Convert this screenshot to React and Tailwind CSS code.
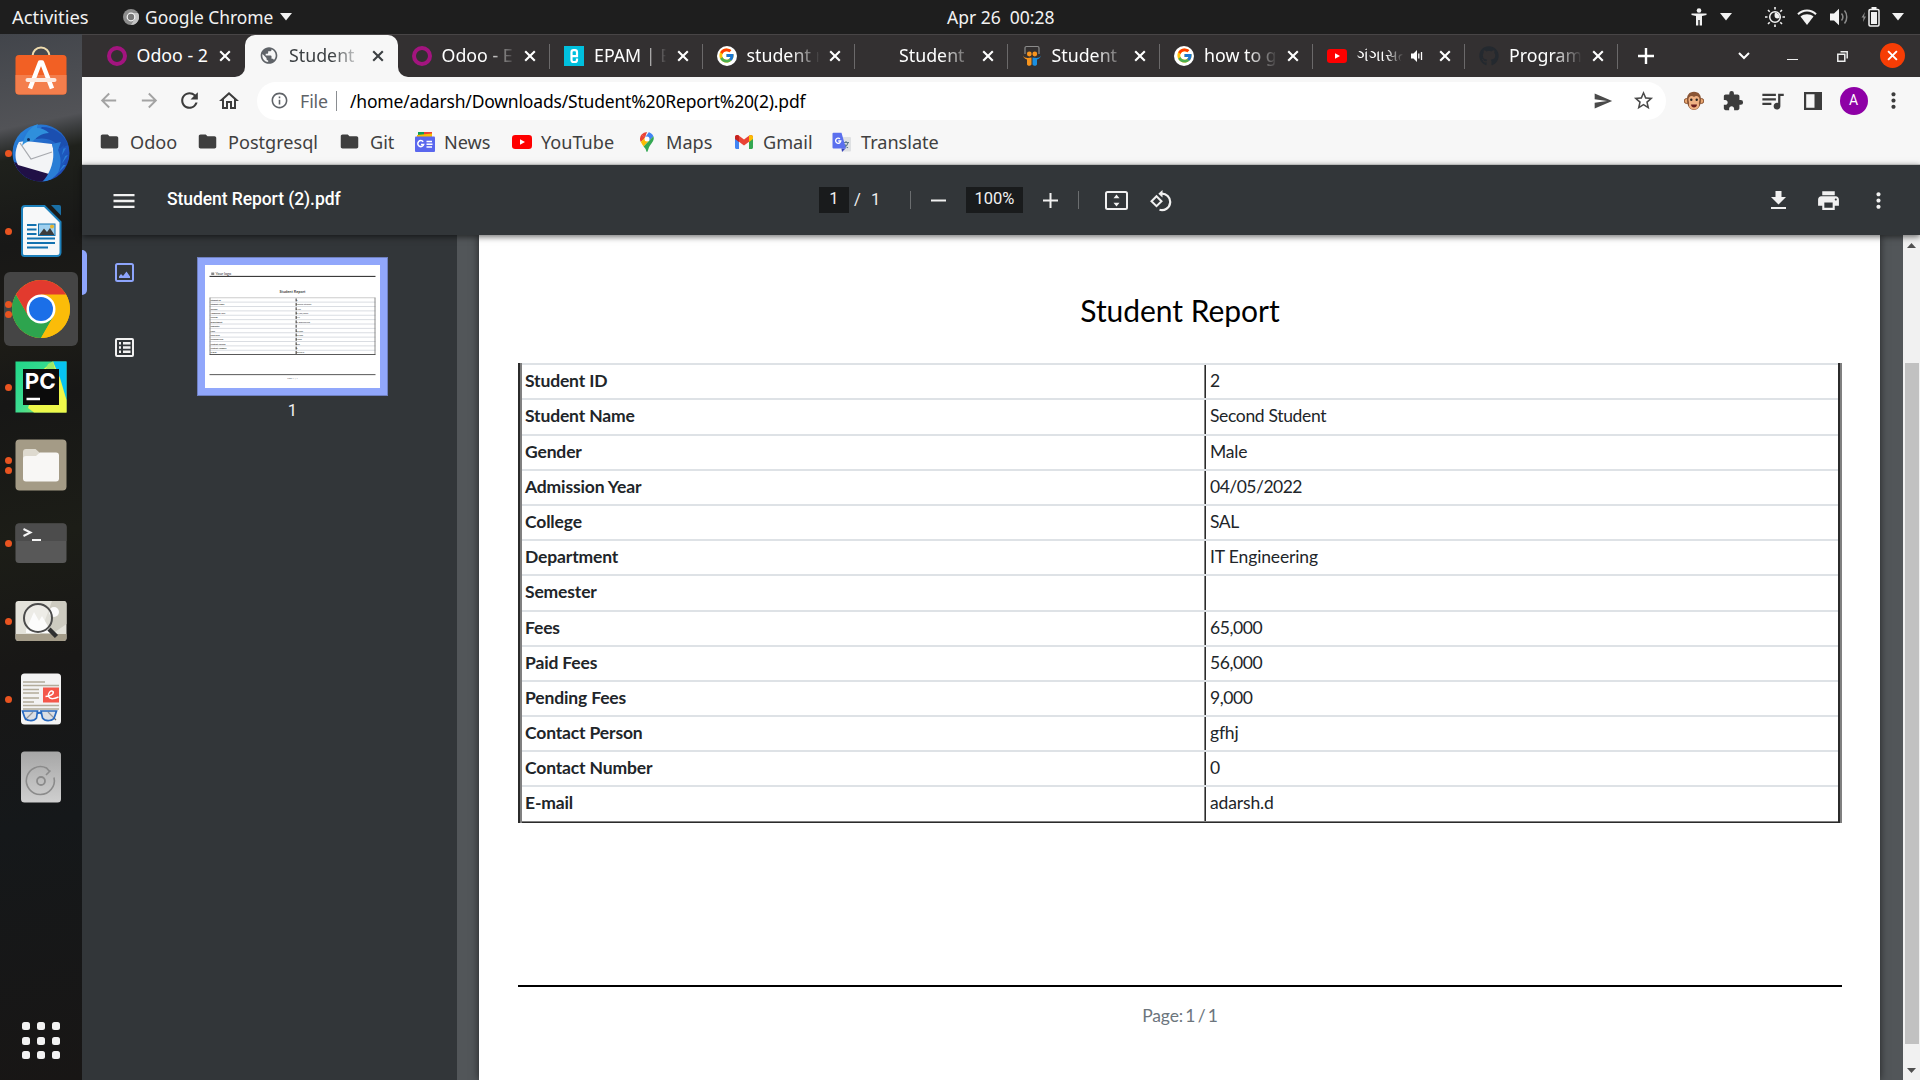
import React from "react";
import {
  MdArrowBack, MdArrowForward, MdRefresh, MdOutlineHome, MdSend, MdStarBorder, MdExtension,
  MdQueueMusic, MdFolder, MdPrint, MdMoreVert, MdInfoOutline, MdPublic, MdMenu,
} from "react-icons/md";
import { FcGoogle } from "react-icons/fc";
import { FaGithub } from "react-icons/fa";

const rows = [
  ["Student ID", "2", "h-[35px]", ""],
  ["Student Name", "Second Student", "h-[36px]", "tracking-[-0.34px]"],
  ["Gender", "Male", "h-[35px]", "tracking-[-0.2px]"],
  ["Admission Year", "04/05/2022", "h-[35px]", "tracking-[-0.5px]"],
  ["College", "SAL", "h-[35px]", "tracking-[-0.4px]"],
  ["Department", "IT Engineering", "h-[35px]", "tracking-[-0.13px]"],
  ["Semester", "", "h-[36px]", ""],
  ["Fees", "65,000", "h-[35px]", "tracking-[-0.4px]"],
  ["Paid Fees", "56,000", "h-[35px]", "tracking-[-0.4px]"],
  ["Pending Fees", "9,000", "h-[35px]", "tracking-[-0.4px]"],
  ["Contact Person", "gfhj", "h-[35px]", "tracking-[-0.2px]"],
  ["Contact Number", "0", "h-[35px]", ""],
  ["E-mail", "adarsh.d", "h-[36px]", "tracking-[-0.13px]"],
];

function CloseX({ className = "" }) {
  return (
    <svg viewBox="0 0 12 12" className={`size-3 shrink-0 ${className}`}>
      <path d="M1.2 1.2 10.8 10.8M10.8 1.2 1.2 10.8" stroke="currentColor" strokeWidth="2.1" fill="none" />
    </svg>
  );
}

function YouTube() {
  return (
    <svg viewBox="0 0 20 14" className="w-5 h-3.5">
      <rect width="20" height="14" rx="3.2" fill="#f00" />
      <path d="M8 4.2v5.6L13 7z" fill="#fff" />
    </svg>
  );
}

function OdooRing() {
  return <div className="size-5 rounded-full border-[4.5px] border-[#a3147f]" />;
}

function GoogleDisc() {
  return (
    <div className="size-5 rounded-full bg-white flex items-center justify-center">
      <FcGoogle className="size-[17px]" />
    </div>
  );
}

function Epam() {
  return (
    <svg viewBox="0 0 20 20" className="size-5">
      <rect width="20" height="20" fill="#00c0de" />
      <path d="M13 12.500v1.500a2 2 0 0 1-2 2H9.500a2 2 0 0 1-2-2V6.200a2 2 0 0 1 2-2H11a2 2 0 0 1 2 2v4H8" fill="none" stroke="#fff" strokeWidth="2.200" />
    </svg>
  );
}

function SlideShare() {
  return (
    <svg viewBox="0 0 20 22" className="w-5 h-[22px]">
      <path d="M3 9V3a1.500 1.500 0 0 1 1.500-1.500h11A1.500 1.500 0 0 1 17 3v6" fill="none" stroke="#8b8b8b" strokeWidth="1.200" />
      <circle cx="7.300" cy="9" r="2.400" fill="#f7941e" />
      <circle cx="12.800" cy="9" r="2.400" fill="#f7941e" />
      <path d="M1 10.500c1.500 3 5 2.500 8.500 2v7c-1 1.500-3.500 2-4.500 0v-5C3 14 1.500 12.500 1 10.500z" fill="#f7941e" />
      <path d="M19 10.500c-1.500 3-5 2.500-8.500 2v7c1 1.500 3.500 2 4.500 0v-5c2-.5 3.500-2 4-4z" fill="#1b8fe0" />
    </svg>
  );
}

function Speaker({ className }) {
  return (
    <svg viewBox="0 0 14 14" className={className}>
      <path d="M1 4.500h2.500L7 1v12L3.500 9.500H1z" fill="#fff" />
      <path d="M8.800 4.500v5M11.500 3v8" stroke="#fff" strokeWidth="1.300" />
    </svg>
  );
}

const tabs = [
  { icon: <OdooRing />, label: "Odoo - 2" },
  { icon: <MdPublic className="size-[23px] text-[#5f6368]" />, label: "Student", active: true },
  { icon: <OdooRing />, label: "Odoo - E", fade: true },
  { icon: <Epam />, label: "EPAM | E", fade: true },
  { icon: <GoogleDisc />, label: "student r", fade: true },
  { icon: null, label: "Student", fade: true },
  { icon: <SlideShare />, label: "Student", fade: true },
  { icon: <GoogleDisc />, label: "how to g", fade: true },
  { icon: <YouTube />, label: "ગંગાસતી", fade: true, audio: true },
  { icon: <FaGithub className="size-5 text-[#24292f]" />, label: "Program", fade: true },
];

function Tab({ tab, separator }) {
  const tone = tab.active ? "bg-[#f7f7f7] text-[#3c4043] rounded-t-[10px]" : "text-white";
  return (
    <div className={`relative w-[152.500px] h-full flex items-center shrink-0 pl-[14px] pb-px ${tone}`}>
      {tab.active && (
        <>
          <div className="absolute bottom-0 -left-[10px] size-[10px] overflow-hidden bg-[#f7f7f7]"><div className="size-full rounded-br-[10px] bg-[#333031]" /></div>
          <div className="absolute bottom-0 -right-[10px] size-[10px] overflow-hidden bg-[#f7f7f7]"><div className="size-full rounded-bl-[10px] bg-[#333031]" /></div>
        </>
      )}
      <div className="w-5 h-6 flex items-center justify-center shrink-0">{tab.icon}</div>
      <div className={`ml-2.5 overflow-hidden whitespace-nowrap leading-6 -mt-px ${tab.audio ? "w-[46px] text-[16px]" : "w-[72px] text-[17.800px]"} ${tab.fade || tab.active ? "[mask-image:linear-gradient(to_right,black_60%,rgba(0,0,0,0.15)_97%,transparent)]" : ""}`}>{tab.label}</div>
      {tab.audio && <Speaker className="size-3.5 ml-[7px] mr-[5px]" />}
      <CloseX className="ml-[10.500px]" />
      {separator && <div className="absolute right-0 top-[9px] w-px h-[25px] bg-[#6b696a]" />}
    </div>
  );
}

function Caret({ className = "" }) {
  return <svg viewBox="0 0 12 8" className={`w-3 h-2 shrink-0 ${className}`}><path d="M0 0h12L6 7.500z" fill="#f2f2f2" /></svg>;
}

function TopBar() {
  return (
    <div className="h-[34px] bg-[#1e1e1e] text-[#f2f2f2] flex items-center text-[17.500px] leading-6 shrink-0">
      <div className="w-[123px] pl-3 text-[18.400px]">Activities</div>
      <svg viewBox="0 0 16 16" className="size-4">
        <circle cx="8" cy="8" r="8" fill="#8d8d8d" />
        <path d="M8 4h7a8 8 0 0 1-7 12l3.500-6z" fill="#c4c4c4" />
        <circle cx="8" cy="8" r="3.800" fill="#777" stroke="#f5f5f5" strokeWidth="1.200" />
      </svg>
      <div className="ml-[6px] w-[129px] whitespace-nowrap text-[17.400px]">Google Chrome</div>
      <Caret className="ml-[6px]" />
      <div className="ml-[655px] w-[109px] whitespace-pre">Apr 26  00:28</div>
      <svg viewBox="0 0 16 18" className="ml-[635px] w-4 h-[18px]">
        <circle cx="8" cy="2.500" r="2.300" fill="#f2f2f2" />
        <path d="M.5 5.500h15v1.600L11 8v9.500H8.700V12H7.300v5.500H5V8L.5 7.100z" fill="#f2f2f2" />
      </svg>
      <Caret className="ml-[13px]" />
      <svg viewBox="0 0 20 20" className="ml-[33px] size-5">
        <g stroke="#f2f2f2" strokeWidth="1.600"><path d="M10 0v2.500M10 17.500V20M0 10h2.500M17.500 10H20M3 3l1.700 1.700M15.300 15.300 17 17M17 3l-1.700 1.700M4.700 15.300 3 17" /></g>
        <circle cx="10" cy="10" r="5.300" fill="none" stroke="#f2f2f2" strokeWidth="1.500" />
        <path d="M10 5.500c-1.500 5 1 7 4.500 5.500A5 5 0 0 0 10 5.500z" fill="#f2f2f2" />
      </svg>
      <svg viewBox="0 0 20 16" className="ml-[12px] w-5 h-4">
        <path d="M10 16 3.500 7.500C7 4.500 13 4.500 16.500 7.500z" fill="#f2f2f2" />
        <path d="M1 5.300C6 .2 14 .2 19 5.300" fill="none" stroke="#f2f2f2" strokeWidth="2" />
      </svg>
      <svg viewBox="0 0 19 18" className="ml-[13px] w-[19px] h-[18px]">
        <path d="M0 5.500h4L9 .8v16.400L4 12.500H0z" fill="#f2f2f2" />
        <path d="M11.500 5.500c1.600 2 1.600 5 0 7M14.500 2.500c3 3.500 3 9.500 0 13" fill="none" stroke="#8a8a8a" strokeWidth="1.500" />
      </svg>
      <svg viewBox="0 0 19 20" className="ml-[12px] w-[19px] h-5">
        <path d="M4 5 .5 10.500h2L2 15l3-5.500H3z" fill="#8a8a8a" />
        <rect x="8" y="2.500" width="10" height="16.500" rx="1.200" fill="none" stroke="#f2f2f2" strokeWidth="1.500" />
        <path d="M10.500 0h5v2h-5zM10 5h6v12h-6z" fill="#f2f2f2" />
      </svg>
      <Caret className="ml-[12px]" />
    </div>
  );
}

function TabStrip() {
  return (
    <div className="h-[43px] bg-[#333031] border-t border-[#484546] flex items-center text-white pl-[10.500px] shrink-0">
      {tabs.map((t, i) => <Tab key={i} tab={t} separator={i > 1} />)}
      <svg viewBox="0 0 16 16" className="ml-[20px] mb-px size-4"><path d="M8 0v16M0 8h16" stroke="#fff" strokeWidth="2.400" /></svg>
      <svg viewBox="0 0 12 8" className="ml-[84px] w-3 h-2"><path d="m1 1 5 5 5-5" fill="none" stroke="#fff" strokeWidth="2" /></svg>
      <div className="ml-[37px] mt-[7px] w-[11px] h-[1.500px] bg-[#eee]" />
      <svg viewBox="0 0 11 11" className="ml-[39px] size-[11px]"><path d="M.8 3.200h7v7h-7zM3.500.8h6.700v6.700" fill="none" stroke="#eee" strokeWidth="1.500" /></svg>
      <div className="ml-[32px] mb-px size-[25px] rounded-full bg-[#f63d05] flex items-center justify-center"><CloseX className="size-[11px]" /></div>
    </div>
  );
}

function Monkey() {
  return (
    <svg viewBox="0 0 20 20" className="size-5">
      <circle cx="2.700" cy="10" r="2.500" fill="#e8a66f" stroke="#8a5535" />
      <circle cx="17.300" cy="10" r="2.500" fill="#e8a66f" stroke="#8a5535" />
      <path d="M10 .8c5 0 7.300 3.500 7 8.500-.2 6-3 9.700-7 9.700s-6.800-3.700-7-9.700C2.700 4.300 5 .8 10 .8z" fill="#8a5535" />
      <path d="M10 6c2-2 5.500-1 5.500 2.500 0 2-1 2.500-.5 5 .3 3.500-2.500 5-5 5s-5.300-1.500-5-5c.500-2.500-.5-3-.5-5C4.500 5 8 4 10 6z" fill="#efb183" />
      <circle cx="7.300" cy="8.700" r="1.200" fill="#2a2320" /><circle cx="12.700" cy="8.700" r="1.200" fill="#2a2320" />
      <path d="M7 13.500h6c0 4-6 4-6 0z" fill="#6b1f1f" />
    </svg>
  );
}

function Toolbar() {
  return (
    <div className="h-[46px] pt-px flex items-center pl-[15px] text-[#3c3c3c] shrink-0">
      <MdArrowBack className="size-[23px] text-[#a3a3a3]" />
      <MdArrowForward className="ml-[17.500px] size-[23px] text-[#a3a3a3]" />
      <MdRefresh className="ml-[16px] size-[25px]" />
      <MdOutlineHome className="ml-[15px] size-[24px]" />
      <div className="ml-[16.500px] w-[1409px] h-[38px] rounded-full bg-white flex items-center pl-[13px]">
        <MdInfoOutline className="size-[19px] text-[#5f6368]" />
        <div className="ml-[11px] w-[27px] text-[17.800px] leading-6 text-[#5f6368] tracking-[-0.1px]">File</div>
        <div className="ml-[9px] w-px h-[20px] bg-[#8a8d91]" />
        <div className="ml-[13px] whitespace-nowrap text-[17.500px] tracking-[-0.180px] leading-6 text-black w-[460px]">/home/adarsh/Downloads/Student%20Report%20(2).pdf</div>
        <MdSend className="ml-[783px] size-[20px] text-[#4a4a4a]" />
        <MdStarBorder className="ml-[19px] size-[23px] text-[#4a4a4a]" />
      </div>
      <div className="ml-[17.500px]"><Monkey /></div>
      <MdExtension className="ml-[18.500px] size-[22px]" />
      <MdQueueMusic className="ml-[15px] size-[27px]" />
      <svg viewBox="0 0 18 18" className="ml-[17.500px] size-[18px]"><path d="M0 0h18v18H0zM2.200 2.200v13.600h8.300V2.200z" fill="#3c3c3c" fillRule="evenodd" /></svg>
      <div className="ml-[18px] size-7 rounded-full bg-[#8e00a6] text-white text-[14px] font-[Roboto,sans-serif] flex items-center justify-center">A</div>
      <MdMoreVert className="ml-[13px] size-[25px]" />
    </div>
  );
}

function NewsIcon() {
  return (
    <svg viewBox="0 0 20 20" className="size-5">
      <path d="M3 0h9v4H3z" fill="#0c9d58" /><path d="M9 0h8v5H9z" fill="#ea4335" />
      <path d="m2 3 15-1.500V8H2z" fill="#fbbc04" />
      <rect y="4.500" width="20" height="15.500" rx="1" fill="#5a67ee" />
      <path d="M8.200 9.800a3 3 0 1 0 .5 2.600H6M11.500 9.500h5.500M11.500 12.300h6M11.500 15.100h5.500" fill="none" stroke="#fff" strokeWidth="1.500" />
    </svg>
  );
}
function MapsIcon() {
  return (
    <svg viewBox="0 0 14 20" className="w-3.5 h-5">
      <path d="M7 0a7 7 0 0 0-5.400 2.500L5 5.400z" fill="#ea4335" />
      <path d="M1.600 2.500A7 7 0 0 0 .8 10L5.500 5.800z" fill="#ea4335" />
      <path d="M7 0c2.900 0 5.400 1.700 6.400 4.200L8.600 9.500 5 5.400 8.800.2z" fill="#4285f4" />
      <path d="M.8 10 5 5.400l3.600 3.800-5 5.300C2.500 13 1.500 11.500.8 10z" fill="#fbbc04" />
      <path d="M13.400 4.200c1.800 5.300-3.200 7.300-5 12.800-.5 1.500-.8 3-1.400 3s-.9-1.500-1.400-3l-2-2.500z" fill="#34a853" />
      <circle cx="7" cy="7" r="2.500" fill="#fff" />
    </svg>
  );
}
function GmailIcon() {
  return (
    <svg viewBox="0 0 18 14" className="w-[18px] h-3.5">
      <path d="M0 2v10.500C0 13.300.7 14 1.500 14H4V6z" fill="#4285f4" />
      <path d="M18 2v10.500c0 .8-.7 1.500-1.500 1.500H14V6z" fill="#34a853" />
      <path d="M0 2.200C0 .2 2.200-.7 3.700.5L9 4.500l5.300-4C15.800-.7 18 .2 18 2.200L14 6.800 9 10.500 4 6.800z" fill="#ea4335" />
      <path d="M14 .8C15.500-.7 18 .2 18 2.200V4l-4 3z" fill="#fbbc04" />
      <path d="M4 .8C2.500-.7 0 .2 0 2.200V4l4 3z" fill="#c5221f" />
    </svg>
  );
}
function TranslateIcon() {
  return (
    <svg viewBox="0 0 20 20" className="size-5">
      <path d="M7 5h11a1 1 0 0 1 1 1v12.500a1 1 0 0 1-1 1h-8z" fill="#dfe1e3" />
      <path d="M11 10.500h6M14 9v1.500M16 10.500c-.5 2.500-2 4-4 5M12.500 12c1 2 2 3 3.500 3.800" fill="none" stroke="#607d8b" strokeWidth="1.100" />
      <path d="M9.500 16.500h4L10 20z" fill="#3742b8" />
      <path d="M1.500.8h8L14 16.500H1.500a1 1 0 0 1-1-1V1.800a1 1 0 0 1 1-1z" fill="#5b70ee" />
      <path d="M8 6.800a2.600 2.600 0 1 0 .8 2.200H6.300" fill="none" stroke="#fff" strokeWidth="1.300" />
    </svg>
  );
}

const folder = <MdFolder className="size-[21px] -ml-[3px] text-[#3f3f3f]" />;
const bookmarks = [
  [folder, "Odoo", "w-[98px]"],
  [folder, "Postgresql", "w-[142px]"],
  [folder, "Git", "w-[74px]"],
  [<NewsIcon />, "News", "w-[97px]"],
  [<YouTube />, "YouTube", "w-[125px]"],
  [<MapsIcon />, "Maps", "w-[97px]"],
  [<GmailIcon />, "Gmail", "w-[98px]"],
  [<TranslateIcon />, "Translate", "w-[120px]"],
];

function Bookmarks() {
  return (
    <div className="h-[41px] pb-1 flex items-center pl-[19px] text-[18.100px] leading-6 text-[#404040] shrink-0">
      {bookmarks.map(([icon, label, width]) => (
        <div key={label} className={`flex items-center shrink-0 ${width}`}>
          <div className="w-5 flex justify-center">{icon}</div>
          <div className="ml-[9px]">{label}</div>
        </div>
      ))}
    </div>
  );
}

function PdfToolbar() {
  return (
    <div className="relative z-10 h-[71px] border-t border-[#b9bab9] bg-[#323639] text-[#f1f1f1] shadow-[0_2px_6px_rgba(0,0,0,0.55)] flex items-center shrink-0 font-[Roboto,sans-serif] text-[16.500px] leading-5">
      <MdMenu className="ml-[28px] mt-px size-[28px]" />
      <div className="ml-[29px] mb-[3px] w-[652px] text-[17.500px] tracking-[-0.070px] font-medium text-white">Student Report (2).pdf</div>
      <div className="w-[30px] h-[26px] bg-[#191b1c] flex items-center justify-center pb-[3px]">1</div>
      <div className="ml-[5px] w-[17px]">/</div>
      <div className="w-[39px]">1</div>
      <div className="w-px h-[18px] bg-[#6b6e70]" />
      <svg viewBox="0 0 15 15" className="ml-[20px] mt-px size-[15px]"><path d="M0 7.500h15" stroke="#f1f1f1" strokeWidth="2" /></svg>
      <div className="ml-[20px] w-[57px] h-[26px] bg-[#191b1c] flex items-center justify-center pb-[3px]">100%</div>
      <svg viewBox="0 0 15 15" className="ml-[20px] mt-px size-[15px]"><path d="M0 7.500h15M7.500 0v15" stroke="#f1f1f1" strokeWidth="2" /></svg>
      <div className="ml-[20px] w-px h-[18px] bg-[#6b6e70]" />
      <svg viewBox="0 0 23 19" className="ml-[26px] mt-px w-[23px] h-[19px]">
        <rect x="1" y="1" width="21" height="17" rx="1.500" fill="none" stroke="#f1f1f1" strokeWidth="2" />
        <path d="m11.500 3.500 3 3.800h-6zM11.500 15.500l3-3.800h-6z" fill="#f1f1f1" />
      </svg>
      <svg viewBox="0 0 22 22" className="ml-[22px] mt-px size-[22px]">
        <path d="m6.500 6.200 5 5-5 5-5-5z" fill="none" stroke="#f1f1f1" strokeWidth="2" />
        <path d="M11 3.600a8.300 8.300 0 1 1-1.500 16.200" fill="none" stroke="#f1f1f1" strokeWidth="2.200" />
        <path d="M12.500 0v7.500L8.300 3.700z" fill="#f1f1f1" />
      </svg>
      <svg viewBox="0 0 15 18" className="ml-[599px] w-[15px] h-[18px]"><path d="M4.500 0h6v6H15l-7.500 7.500L0 6h4.500zM0 16h15v2H0z" fill="#f1f1f1" /></svg>
      <MdPrint className="ml-[30px] mt-px size-[25px]" />
      <MdMoreVert className="ml-[25px] mt-px size-[25px]" />
    </div>
  );
}

/* Small preview of the single page, drawn in page units. */
function Thumbnail() {
  return (
    <svg viewBox="0 0 1400 984" className="size-full bg-white font-[Lato,sans-serif]">
      <path d="M50 60h24v20H50z" fill="#888" />
      <text x="84" y="82" fontSize="30" fontWeight="700" fill="#666">Your logo</text>
      <path d="M36 91h1328" stroke="#000" strokeWidth="7" />
      <text x="700" y="220" fontSize="31" fontWeight="700" textAnchor="middle" fill="#444">Student Report</text>
      <path d="M36 262h1328" stroke="#999" strokeWidth="4" />
      {rows.map(([a, b], i) => (
        <g key={a}>
          <text x="44" y={287 + i * 35} fontSize="17.500" fontWeight="700" fill="#333">{a}</text>
          <text x="730" y={287 + i * 35} fontSize="17.500" fill="#333">{b}</text>
          {i > 0 && <path d={`M36 ${262 + i * 35}h1328`} stroke="#c4c8d0" strokeWidth="5" />}
          <path d={`M729 ${268 + i * 35}v24`} stroke="#111" strokeWidth="7" />
        </g>
      ))}
      <path d="M40 262v453M1360 262v453" stroke="#666" strokeWidth="6" />
      <path d="M36 716h1328M36 877h1328" stroke="#222" strokeWidth="6" />
      <text x="700" y="913" fontSize="18" textAnchor="middle" fill="#666">Page: 1 / 1</text>
    </svg>
  );
}

function Sidebar() {
  return (
    <div className="w-[375px] bg-[#323639] flex shrink-0">
      <div className="w-[79px] pt-[15px]">
        <div className="flex items-center h-[45px]">
          <div className="w-[5px] h-[45px] rounded-r-[5px] bg-[#8ea5fc]" />
          <svg viewBox="0 0 19 19" className="ml-[28px] size-[19px]">
            <rect x="1" y="1" width="17" height="17" rx="1.500" fill="none" stroke="#8ea5fc" strokeWidth="2" />
            <path d="M4 15v-1.500l2-2.500 2 2 3.500-4.500 3.500 5V15z" fill="#8ea5fc" />
          </svg>
        </div>
        <svg viewBox="0 0 19 19" className="ml-[33px] mt-[43px] size-[19px]">
          <rect x="1" y="1" width="17" height="17" rx="1" fill="none" stroke="#f1f1f1" strokeWidth="2" />
          <path d="M4 5.200h2M8 5.200h7.500M4 9.500h2M8 9.500h7.500M4 13.800h2M8 13.800h7.500" stroke="#f1f1f1" strokeWidth="2.400" />
        </svg>
      </div>
      <div className="ml-[36px] pt-[22px] w-[191px]">
        <div className="w-[191px] h-[139px] bg-[#91a7fb] border border-[#6f80c0] p-[7px]"><Thumbnail /></div>
        <div className="mt-[5px] text-center text-[16.500px] leading-5 text-[#f1f1f1] font-[Roboto,sans-serif]">1</div>
      </div>
    </div>
  );
}

function Page() {
  return (
    <div className="w-[1401px] bg-white shrink-0 pl-[39px] pr-[38px] shadow-[0_0_8px_rgba(0,0,0,0.6)] font-[Lato,sans-serif]">
      <h1 className="pt-[55px] h-[128px] text-center text-[30px] leading-[40px] text-black tracking-[-0.040px]">Student Report</h1>
      <div className="border-l-2 border-r-2 border-l-[#2b2b2b] border-r-[#808080] text-[17.500px] leading-[26px] text-[#212529]">
        <div className="border-l-2 border-r-2 border-l-[#808080] border-r-[#2b2b2b]">
          {rows.map(([label, value, height, tracking]) => (
            <div key={label} className={`flex border-t-2 border-[#dee2e6] ${height}`}>
              <div className="w-[682px] pl-[3px] pt-[3px] font-bold tracking-[-0.150px]">{label}</div>
              <div className="flex-1 border-l border-[#808080]"><div className={`h-full border-l border-[#2b2b2b] pl-[4px] pt-[3px] ${tracking}`}>{value}</div></div>
            </div>
          ))}
          <div className="border-t border-b border-t-[#808080] border-b-[#2b2b2b]" />
        </div>
      </div>
      <div className="mt-[162px] h-0.5 bg-black" />
      <div className="mt-[15px] text-center text-[17.500px] leading-7 text-[#6c757d] tracking-[-0.150px] [word-spacing:-2px]">Page: 1 / 1</div>
    </div>
  );
}

function Scrollbar() {
  return (
    <div className="w-[17px] bg-[#f1f1f1] flex flex-col items-center shrink-0">
      <svg viewBox="0 0 9 5" className="mt-[8px] w-[9px] h-[5px]"><path d="M0 5h9L4.500 0z" fill="#505050" /></svg>
      <div className="mt-[115px] w-[14px] h-[681px] bg-[#c1c1c1]" />
      <svg viewBox="0 0 9 5" className="mt-[24px] w-[9px] h-[5px]"><path d="M0 0h9L4.500 5z" fill="#505050" /></svg>
    </div>
  );
}

function Software() {
  return (
    <svg viewBox="0 0 58 58" className="size-[58px]">
      <path d="M20.500 12.500V10a8.500 8.500 0 0 1 17 0v2.500" fill="none" stroke="#efdcae" strokeWidth="2" />
      <rect x="3.500" y="9" width="51" height="39.500" rx="3.500" fill="#f26024" />
      <path d="M3.500 29h51v16a3.500 3.500 0 0 1-3.500 3.500H7A3.500 3.500 0 0 1 3.500 45z" fill="#f47e4c" />
      <path d="m18 42.500 10-26h2l10 26" fill="none" stroke="#fff" strokeWidth="4.500" strokeLinejoin="round" />
      <path d="M15.500 34h27" stroke="#fde9df" strokeWidth="4" strokeLinecap="round" />
    </svg>
  );
}
function Thunderbird() {
  return (
    <svg viewBox="0 0 58 58" className="size-[58px]">
      <defs>
        <clipPath id="birdDisc"><circle cx="29" cy="29" r="28.500" /></clipPath>
        <linearGradient id="birdWing" x1="0" y1="0" x2="1" y2="1"><stop offset="0" stopColor="#2a8be0" /><stop offset="1" stopColor="#1c3fae" /></linearGradient>
      </defs>
      <g clipPath="url(#birdDisc)">
        <rect width="58" height="58" fill="url(#birdWing)" />
        <path d="M2 38 40 50 34 58H10z" fill="#201046" />
        <path d="M7 18C2 27 3 36 6 41l31 9c6-6 6-20 3-30L14 17z" fill="#f3f4f6" />
        <path d="m8 19 11 16 21-7" fill="none" stroke="#a9abb0" strokeWidth="1.300" />
        <path d="M30 3c12 0 22 7 26 18l-8 4c-4-8-12-12-24-10 0-5 2-9 6-12z" fill="#1b4fb0" />
        <path d="m40 20 9-2-3 8 8-2-5 9 7-2-7 10 5 0-9 9c-5 6-9 7-16 9 10-9 15-26 11-39z" fill="#2a7ed6" />
        <path d="m46 26 6-5-2 10 5-3-5 11 4-2-8 12c4-9 3-16 0-23z" fill="#1c58bd" />
      </g>
      <path d="M10 22C13 8 20 2 26 0c-1 2-1 3-1 4 5 0 9 2 12 5-7 0-12 4-16 8-4 0-8 1-11 5z" fill="#2f8fdc" />
      <circle cx="16.500" cy="15.500" r="1.500" fill="#0e2d5e" />
    </svg>
  );
}
function Writer() {
  return (
    <svg viewBox="0 0 58 58" className="size-[58px]">
      <path d="M10 7a3 3 0 0 1 3-3h19.500L48.500 20v30.500a3.500 3.500 0 0 1-3.500 3.500H12.500A2.500 2.500 0 0 1 10 51.500z" fill="#f7f8f9" stroke="#1d80bb" strokeWidth="2" />
      <path d="M39 3h8a2 2 0 0 1 2 2v8.500z" fill="#1a6fa6" />
      <path d="M15 23h9.500M15 27.500h9.500M15 32h9.500M15 36.500h28M15 41h28M15 45.500h21" stroke="#1372b0" strokeWidth="2" />
      <rect x="26.500" y="22" width="16.500" height="11.500" fill="#9fd0ef" />
      <path d="m27 33 5-6.500 3 3.500 3-4 4.500 7z" fill="#3c3c3c" /><circle cx="40" cy="24.500" r="2" fill="#e8b62c" />
      <rect x="26.500" y="22" width="16.500" height="11.500" fill="none" stroke="#1372b0" />
    </svg>
  );
}
function ChromeLogo() {
  return (
    <svg viewBox="0 0 58 58" className="size-[58px]">
      <circle cx="29" cy="29" r="29" fill="#fbbc09" />
      <path d="M29 29 3.900 14.500A29 29 0 0 1 54.100 14.500z" fill="#e23a2e" />
      <path d="M3.900 14.500A29 29 0 0 0 29 58L41.500 36.300 29 29 16.500 36z" fill="#2da44e" />
      <path d="M3.900 14.500 16.500 36.300 29 29V14.500z" fill="#e23a2e" />
      <path d="M29 14.500h25.100A29 29 0 0 1 29 58l12.600-21.800z" fill="#fbbc09" />
      <circle cx="29" cy="29" r="14.500" fill="#fff" /><circle cx="29" cy="29" r="12" fill="#1b6fe8" />
    </svg>
  );
}
function PyCharm() {
  return (
    <svg viewBox="0 0 58 58" className="size-[58px]">
      <defs>
        <linearGradient id="pcEdge" x1="0" y1="0" x2="1" y2="1"><stop offset="0" stopColor="#21d789" /><stop offset="0.5" stopColor="#3ddc91" /><stop offset="1" stopColor="#b9ee55" /></linearGradient>
      </defs>
      <rect x="3.500" y="3.500" width="51" height="51" fill="url(#pcEdge)" />
      <path d="M41 3.500h13.500V42L44 30z" fill="#07c3f2" />
      <path d="M28 14 41 3.500 48 20l6.500 22v12.500H22L16 50z" fill="#eef84a" />
      <path d="m36 6 5-2.500L45 20H30z" fill="#9be86a" />
      <rect x="11" y="11" width="36" height="36" fill="#0b0b0b" />
      <text x="12.800" y="31" fontSize="22" fontWeight="700" fill="#fff" textLength="31" lengthAdjust="spacingAndGlyphs" className="font-[Inter,sans-serif]">PC</text>
      <path d="M14.500 41h13.500" stroke="#fff" strokeWidth="2.500" />
    </svg>
  );
}
function Files() {
  return (
    <svg viewBox="0 0 58 58" className="size-[58px]">
      <rect x="3.500" y="3.500" width="51" height="51" rx="4" fill="#a49b86" />
      <path d="M11 16a3 3 0 0 1 3-3h9.500l4.500 4v7H11z" fill="#dedacf" />
      <path d="M11 23a3 3 0 0 1 3-3h10l4-3.500h16a3 3 0 0 1 3 3v23a3 3 0 0 1-3 3H14a3 3 0 0 1-3-3z" fill="#f8f7f5" />
    </svg>
  );
}
function Terminal() {
  return (
    <svg viewBox="0 0 58 58" className="size-[58px]">
      <rect x="3.500" y="9.500" width="51" height="39.500" rx="3.500" fill="#585858" />
      <path d="M3.500 13A3.500 3.500 0 0 1 7 9.500h44a3.500 3.500 0 0 1 3.500 3.500v14h-51z" fill="#4c4c4c" />
      <path d="m11.500 15 7 3.500-7 3.500M20 26h9" fill="none" stroke="#f5f5f5" strokeWidth="2" />
    </svg>
  );
}
function ImageViewer() {
  return (
    <svg viewBox="0 0 58 58" className="size-[58px]">
      <rect x="3.500" y="9" width="51" height="40" rx="3" fill="#e3e2da" />
      <path d="M40 9h11.500a3 3 0 0 1 3 3v20L40 42H28z" fill="#cdcbc0" />
      <circle cx="42" cy="20" r="5" fill="#fafafa" />
      <path d="M3.500 42h51v4a3 3 0 0 1-3 3h-45a3 3 0 0 1-3-3z" fill="#a59d8a" />
      <path d="M14 38 22 20l5 9 3-5 10 17H14z" fill="#fbfbfb" />
      <circle cx="26" cy="26" r="14" fill="#fff" fillOpacity="0.35" stroke="#4b4b4b" strokeWidth="2" />
      <path d="m37 37 7.500 7.500" stroke="#2f2f2f" strokeWidth="4.500" />
    </svg>
  );
}
function DocViewer() {
  return (
    <svg viewBox="0 0 58 58" className="size-[58px]">
      <rect x="9" y="3.500" width="40" height="51" rx="3.500" fill="#f3f3f3" />
      <path d="M11 12h22M11 15.500h36M11 19.500h16M11 23h16M11 28h16M11 32h11M11 35.500h36M11 39h36" stroke="#b3ac9b" strokeWidth="1.600" />
      <rect x="31" y="17.500" width="16" height="15" fill="#f4574a" />
      <path d="M33.500 26.500c4.500 0 9-2.500 7.500-5-2-2-5.500 2-4.500 5 2 3.500 6 2 10 .5" fill="none" stroke="#fff" strokeWidth="1.500" />
      <path d="m13 50 8-8M44 50l-8-8" stroke="#666" strokeWidth="1.200" />
      <path d="M10.500 41h15l-1 7c-3 4-11 3-12-1zM29 41h15.500l-2 6c-1 4-9 5-12 1z" fill="#c3cad6" fillOpacity="0.5" stroke="#2768bf" strokeWidth="1.700" />
      <path d="M25 43.500q2.500-1.500 4.500 0" stroke="#2768bf" strokeWidth="2" fill="none" />
    </svg>
  );
}
function Disk() {
  return (
    <svg viewBox="0 0 58 58" className="size-[58px]">
      <defs><linearGradient id="diskBody" x1="0" y1="0" x2="0" y2="1"><stop offset="0" stopColor="#a6a6a6" /><stop offset="1" stopColor="#cfcfcf" /></linearGradient></defs>
      <rect x="9" y="3.500" width="40" height="51" rx="3.500" fill="url(#diskBody)" />
      <path d="M42 29.500a14 14 0 1 1-7.500-9.500l3.500 4M38.500 22.500l-4.500 4.500" fill="none" stroke="#8b8b8b" strokeWidth="1.600" />
      <circle cx="29" cy="33" r="4" fill="none" stroke="#8b8b8b" strokeWidth="1.800" />
    </svg>
  );
}

const dock = [
  [<Software />, 0], [<Thunderbird />, 1], [<Writer />, 1], [<ChromeLogo />, 2, true], [<PyCharm />, 1],
  [<Files />, 2], [<Terminal />, 1], [<ImageViewer />, 1], [<DocViewer />, 1], [<Disk />, 0],
];

function Dock() {
  return (
    <div className="w-[82px] shrink-0 pt-0.5 flex flex-col bg-[#191816] bg-[linear-gradient(168deg,#42454b_0%,#525357_9%,#3f4143_10%,#1f211c_12%,#181817_20%,#1d1c17_29%,#171716_35%,#1c1d17_48%,#181716_60%,#15181a_75%,#181615_100%)]">
      {dock.map(([icon, dots, active], i) => (
        <div key={i} className="h-[78px] flex items-center shrink-0">
          <div className={`h-[74px] w-[74px] ml-1 rounded-md flex items-center ${active ? "bg-[#454545]" : ""}`}>
            <div className="w-2 flex flex-col items-center gap-[3px] shrink-0">
              {Array.from({ length: dots }, (_, d) => <div key={d} className="size-[7px] rounded-full bg-[#e95420]" />)}
            </div>
            {icon}
          </div>
        </div>
      ))}
      <div className="mt-[206px] ml-[22px] grid grid-cols-3 gap-x-[7px] gap-y-[6.500px] w-[38px]">
        {Array.from({ length: 9 }, (_, i) => <div key={i} className="size-[8px] rounded-[2.500px] bg-[#f2f2f2]" />)}
      </div>
    </div>
  );
}

export default function App() {
  return (
    <div className="w-[1920px] h-[1080px] overflow-hidden flex flex-col bg-[#1e1e1e] font-['Noto_Sans',sans-serif]">
      <TopBar />
      <div className="flex flex-1 min-h-0">
        <Dock />
        <div className="w-[1838px] flex flex-col bg-[#f7f7f7]">
          <TabStrip />
          <Toolbar />
          <Bookmarks />
          <PdfToolbar />
          <div className="flex flex-1 min-h-0">
            <Sidebar />
            <div className="w-[1446px] bg-[#525659] flex pl-[22px] shrink-0 overflow-hidden"><Page /></div>
            <Scrollbar />
          </div>
        </div>
      </div>
    </div>
  );
}
